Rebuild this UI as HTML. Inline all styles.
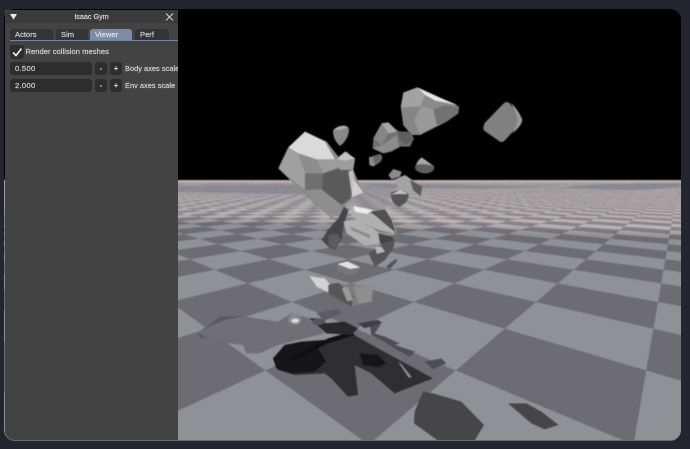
<!DOCTYPE html>
<html>
<head>
<meta charset="utf-8">
<style>
html,body{margin:0;padding:0;background:#23262f;width:690px;height:449px;overflow:hidden;font-family:"Liberation Sans",sans-serif}
#frame{position:absolute;left:4px;top:9px;width:677px;height:432px;background:#000;border-radius:11px;overflow:hidden}
#scene{position:absolute;left:-4px;top:-9px;filter:blur(.45px)}
#edge{position:absolute;left:4px;bottom:0;width:677px;height:1px;background:#6a6e70;z-index:1}
#panel{position:absolute;left:5px;top:10px;width:173px;height:430px;background:#434343;border-bottom-left-radius:9px;overflow:hidden;color:#dcdcdc;font-size:7.6px;z-index:2;-webkit-text-stroke:.15px #dcdcdc}
#title{position:absolute;left:0;top:0;width:173px;height:13px;background:#3a3a3b;border-top-left-radius:6px;text-align:center;line-height:14px;font-size:7.2px;color:#e4e4e4}
#title span{position:absolute;left:0;right:0;top:0}
.tab{position:absolute;top:19px;height:11px;background:#333436;border-radius:3px 3px 0 0;line-height:12px;padding-left:5px;box-sizing:border-box}
.tab.on{background:#7c8ba8;color:#eef0f4}
#line{position:absolute;left:5px;top:30px;width:168px;height:1px;background:#7486a4}
.box{position:absolute;background:#2d2d2e;border-radius:3px}
.val{position:absolute;left:5px;width:82px;height:13px;background:#2d2d2e;border-radius:3px;line-height:14px;padding-left:5px;box-sizing:border-box;letter-spacing:.3px}
.btn{position:absolute;width:12px;height:13px;background:#2d2d2e;border-radius:3px;line-height:13px;text-align:center;font-size:8px;font-weight:bold;-webkit-text-stroke:0}
.lbl{position:absolute;white-space:nowrap;color:#d8d8d8;font-size:7.4px;letter-spacing:.03px}
</style>
</head>
<body>
<div id="frame">
<svg id="scene" width="690" height="449" viewBox="0 0 690 449" xmlns="http://www.w3.org/2000/svg">
<defs>
<linearGradient id="lg" gradientUnits="userSpaceOnUse" x1="0" y1="0" x2="-9" y2="300">
<stop offset=".55" stop-color="#b9b1af"/><stop offset=".695" stop-color="#bbb3b1"/><stop offset=".725" stop-color="#909097"/><stop offset="1" stop-color="#909097"/>
</linearGradient>
<linearGradient id="dg" gradientUnits="userSpaceOnUse" x1="0" y1="0" x2="-9" y2="300">
<stop offset=".55" stop-color="#9c989b"/><stop offset=".695" stop-color="#85848b"/><stop offset=".725" stop-color="#6c6c72"/><stop offset="1" stop-color="#6c6c72"/>
</linearGradient>
</defs>
<rect x="0" y="0" width="690" height="180" fill="#000"/>
<rect x="0" y="180" width="690" height="269" fill="url(#lg)"/>
<path id="chk" fill="url(#dg)" fill-rule="evenodd" d=""/>
<rect x="0" y="180" width="690" height="3" fill="#b5aeac"/>
<polygon points="178,186 300,185 345,200 300,194 178,192" fill="#84838d" opacity=".75"/>
<polygon points="350,183 560,187 480,189 390,188" fill="#85848e" opacity=".7"/>
<polygon points="555,188 605,184 681,183 681,187 640,190" fill="#85848e" opacity=".85"/>
<polygon points="330,186 395,186 385,210 360,212" fill="#85848e" opacity=".4"/>

<!-- shadows -->
<g transform="translate(178 290) scale(.33333)">
<polygon points="65,125 110,85 190,78 300,95 340,70 400,85 440,130 300,165 245,190 205,190 195,165 120,155" fill="#6f6f75"/>
<polygon points="75,118 125,80 195,78 140,90" fill="#59595e"/>
<polygon points="60,128 90,146 65,142" fill="#59595e"/>
<polygon points="415,70 480,55 492,70 440,92" fill="#5c5c61"/>
<polygon points="285,205 320,165 440,150 520,130 600,175 765,265 650,310 580,250 530,225 540,315 510,320 460,265 440,250 350,255 300,240" fill="#2f2f31"/>
<polygon points="285,205 320,165 370,155 440,150 420,175 445,215 410,245 340,250 295,235" fill="#161618"/>
<polygon points="330,205 450,145 520,125 530,135 450,160 350,210" fill="#101012"/>
<polygon points="395,85 430,85 445,100 500,95 540,115 520,135 445,130" fill="#29292b"/>
<ellipse cx="422" cy="95" rx="20" ry="10" fill="#555558"/>
<polygon points="545,190 600,195 625,220 600,232 555,225" fill="#161618"/>
<polygon points="660,215 670,222 702,262 692,263" fill="#8d8d94"/>
<polygon points="575,105 610,100 590,130 620,140 665,160 650,165 712,185 695,200 650,175 610,150 580,135" fill="#4e4e52"/>
<polygon points="540,100 600,90 612,98 560,115" fill="#3e3e41"/>
<polygon points="740,215 790,205 805,220 765,238" fill="#4e4e52"/>
<ellipse cx="350" cy="88" rx="20" ry="17" fill="#85858a"/>
<ellipse cx="352" cy="92" rx="12" ry="7" fill="#d8d8d8"/>
<polygon points="735,305 765,310 850,335 918,405 890,452 780,452 708,400 710,365" fill="#464649"/>
<polygon points="990,340 1045,340 1090,365 1142,405 1100,418 1060,400" fill="#464649"/>
</g>

<!-- rocks -->
<g transform="translate(260 70) scale(.33333)" stroke-linejoin="round">
<polygon points="430,68 472,52 545,85 597,110 595,130 560,155 480,195 455,195 430,165 422,110" fill="#8e8e8e"/>
<polygon points="472,52 545,85 592,105 525,92 495,75" fill="#e6e6e6"/>
<polygon points="430,68 472,52 495,75 480,110 424,112" fill="#a2a2a2"/>
<polygon points="495,75 525,92 592,105 555,105 520,118 485,110" fill="#8a8a8a"/>
<polygon points="520,118 555,105 597,112 595,130 560,155 530,165" fill="#727272"/>
<polygon points="485,110 520,118 530,165 480,195 462,150" fill="#999"/>
<polygon points="424,112 480,110 462,150 480,195 455,195 430,165" fill="#858585"/>

<polygon points="740,108 774,150 725,204 682,174 684,166" fill="#808080" stroke="#808080" stroke-width="24"/>
<path d="M752 98C768 112 782 134 787 150C785 165 770 180 757 190C768 172 775 155 772 148C768 130 760 112 752 98Z" fill="#9a9a9a"/>

<path d="M220 180C232 168 255 162 266 174C270 190 258 215 240 228C230 220 216 200 220 180Z" fill="#888"/>
<path d="M220 180C232 168 255 162 264 172C250 178 235 182 220 180Z" fill="#ababab"/>

<polygon points="365,160 385,157 410,180 420,185 450,185 462,205 450,230 420,230 395,245 370,250 338,235 340,205" fill="#707070"/>
<polygon points="365,160 385,157 412,185 385,190" fill="#a8a8a8"/>
<polygon points="340,205 365,160 385,190 365,225" fill="#868686"/>
<polygon points="365,225 410,195 418,232 370,250 338,235" fill="#8c8c8c"/>
<polygon points="412,185 450,185 462,205 440,225 420,210" fill="#5f5f5f"/>

<path d="M327 262L360 252C368 258 368 268 360 276L340 290L328 285Z" fill="#8a8a8a"/>
<polygon points="338,258 360,252 367,268 345,285" fill="#666"/>

<path d="M485 262L522 288C525 296 520 304 510 308C495 314 475 308 466 298C463 288 470 272 485 262Z" fill="#5e5e5e"/>
<path d="M485 262L522 290C510 284 488 280 470 285C472 275 478 268 485 262Z" fill="#a8a8a8"/>

<polygon points="385,315 400,297 425,305 420,320 395,328" fill="#8a8a8a"/>
<polygon points="400,330 435,315 487,350 482,378 450,370 415,352" fill="#a3a3a3"/>
<polygon points="450,330 487,350 482,378 460,362" fill="#5a5a5a"/>

<path d="M393 368L420 358L445 370C448 385 440 400 418 410C405 408 390 390 393 368Z" fill="#555"/>
<path d="M393 375L420 358L445 372C430 374 410 370 393 375Z" fill="#c0c0c0"/>

<polygon points="55,295 85,232 135,185 200,215 235,260 260,245 285,268 280,300 310,370 275,385 245,420 215,445 135,375" fill="#8a8a8a"/>
<polygon points="85,232 135,185 195,215 225,268 170,268 115,250" fill="#dadada"/>
<polygon points="55,295 85,232 115,250 135,310 135,360" fill="#a0a0a0"/>
<polygon points="115,250 170,268 190,310 135,310" fill="#8d8d8d"/>
<polygon points="170,268 225,268 235,292 190,310" fill="#9c9c9c"/>
<polygon points="135,310 190,310 205,345 185,362 135,362" fill="#6f6f6f"/>
<polygon points="190,310 235,295 278,300 282,330 272,385 245,405 185,360" fill="#5a5a5a"/>
<polygon points="265,305 280,300 285,345 275,372" fill="#bdbdbd"/>
<polygon points="280,325 310,368 275,382" fill="#cfcfcf"/>
<polygon points="135,360 185,358 245,405 215,445" fill="#8e8e8e"/>
<polygon points="225,270 255,245 285,265 278,300 240,300" fill="#9c9c9c"/>
<polygon points="232,268 255,245 285,265 258,272" fill="#c4c4c4"/>

<polygon points="185,510 205,478 235,445 252,410 265,420 250,470 245,510 225,540 205,530" fill="#454545"/>
<polygon points="205,495 230,490 245,510 225,540 205,525" fill="#5c5c5c"/>
<polygon points="265,425 285,408 340,420 385,420 410,485 400,490 355,480 290,450" fill="#b0b0b0"/>
<polygon points="330,425 375,418 395,450 408,488 385,470 350,440" fill="#505050"/>
<polygon points="280,408 340,420 320,432 285,425" fill="#ececec"/>
<polygon points="250,455 290,450 355,485 360,520 315,527 260,490" fill="#b0b0b0"/>
<polygon points="270,470 330,495 330,505 275,480" fill="#8a8a8a"/>
<polygon points="355,490 395,500 405,515 375,525 360,520" fill="#444"/>
<polygon points="325,550 355,530 380,515 405,510 400,535 375,570 345,590" fill="#555"/>
<polygon points="345,530 365,530 375,545 350,552" fill="#b5b5b5"/>
<polygon points="378,590 392,578 410,565 410,575 390,597" fill="#555"/>

<path d="M232 582L265 572C285 578 302 588 300 594C298 606 280 616 265 615L232 602Z" fill="#777"/>
<polygon points="232,582 262,574 300,592 270,597" fill="#e2e2e2"/>

<polygon points="148,618 180,620 215,640 340,650 335,695 275,710 205,670 170,650" fill="#7c7c7c"/>
<polygon points="148,618 195,625 212,645 205,668 170,650" fill="#d2d2d2"/>
<polygon points="205,645 235,638 280,680 275,710 205,670" fill="#565656"/>
<polygon points="280,650 340,650 335,695 295,700" fill="#8e8e8e"/>
<polygon points="245,655 262,650 280,690 262,695" fill="#9a9a9a"/>
</g>
</svg>
<div id="edge"></div>
</div>

<div id="panel">
<div id="title"><span>Isaac Gym</span>
<svg width="173" height="13" style="position:absolute;left:0;top:0"><polygon points="5,4 12,4 8.5,9.5" fill="#eee"/><path d="M161 3.5L168 10.5M168 3.5L161 10.5" stroke="#d5d5d5" stroke-width="1" fill="none"/></svg>
</div>
<div class="tab" style="left:5px;width:43px">Actors</div>
<div class="tab" style="left:51px;width:32px">Sim</div>
<div class="tab on" style="left:85px;width:42px">Viewer</div>
<div class="tab" style="left:130px;width:34px">Perf</div>
<div id="line"></div>
<div class="box" style="left:5px;top:35px;width:14px;height:14px">
<svg width="14" height="14" style="display:block"><path d="M3 7.5L6 10.5L11.5 3.5" stroke="#f0f0f0" stroke-width="1.6" fill="none"/></svg>
</div>
<div class="lbl" style="left:20.5px;top:37px;font-size:7.6px">Render collision meshes</div>
<div class="val" style="top:52px">0.500</div>
<div class="btn" style="left:90px;top:52px">-</div>
<div class="btn" style="left:105px;top:52px">+</div>
<div class="lbl" style="left:120px;top:54px">Body axes scale</div>
<div class="val" style="top:69px">2.000</div>
<div class="btn" style="left:90px;top:69px">-</div>
<div class="btn" style="left:105px;top:69px">+</div>
<div class="lbl" style="left:120px;top:71px">Env axes scale</div>
</div>

<script>
(function(){
var d=[],H=180,R=122,S=265/R;
function fan(vx,p){
  for(var k=-700+p;k<=700;k+=2){
    var a=536+R*k,b=536+R*(k+1);
    var xa=vx+(a-vx)*S,xb=vx+(b-vx)*S;
    d.push("M"+vx+" "+H+"L"+xa.toFixed(1)+" 445L"+xb.toFixed(1)+" 445Z");
  }
}
fan(679,1);fan(0,0);
document.getElementById("chk").setAttribute("d",d.join(""));
})();
</script>
</body>
</html>
